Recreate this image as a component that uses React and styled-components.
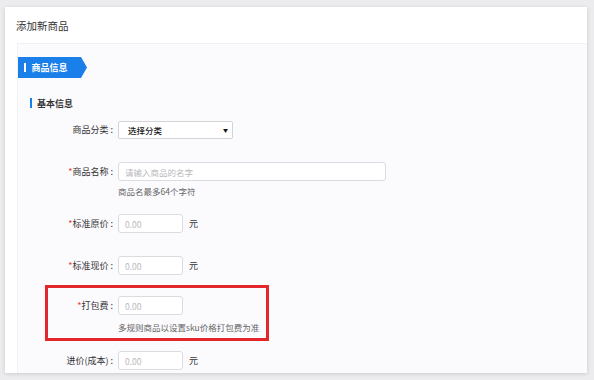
import React from "react";
import styled, { createGlobalStyle } from "styled-components";

const GlobalStyle = createGlobalStyle`
  html, body {
    margin: 0;
    padding: 0;
    background: #ececef;
  }
  body {
    font-family: "Noto Sans CJK SC", "Noto Sans", "Liberation Sans", sans-serif;
    color: #333;
  }
`;

const Page = styled.div`
  width: 594px;
  height: 380px;
  padding: 7px 0 0 5px;
  box-sizing: border-box;
  overflow: hidden;
`;

const Card = styled.div`
  width: 582px;
  height: 366px;
  background: #fff;
  box-shadow: 0 1px 4px rgba(0, 0, 0, 0.14);
  display: flex;
  flex-direction: column;
  overflow: hidden;
`;

const Header = styled.div`
  height: 36px;
  flex-shrink: 0;
  display: flex;
  align-items: center;
  padding-left: 11px;
  font-size: 10.5px;
  color: #333;
`;

const Panel = styled.div`
  flex: 1;
  margin-left: 12px;
  background: #fbfafd;
  border-top: 1px solid #f1f0f3;
  border-left: 1px solid #f1f0f3;
  display: flex;
  flex-direction: column;
  align-items: flex-start;
`;

const Tab = styled.div`
  margin-top: 13px;
  width: 69px;
  height: 21px;
  background: #1b7fe9;
  clip-path: polygon(0 0, 63px 0, 69px 50%, 63px 100%, 0 100%);
  display: flex;
  align-items: center;
  padding-left: 6px;
  box-sizing: border-box;
  color: #fff;
  font-size: 9px;
  font-weight: bold;

  &::before {
    content: "";
    width: 1.5px;
    height: 9px;
    background: #fff;
    margin-right: 6px;
  }
`;

const Section = styled.div`
  margin-top: 19px;
  margin-left: 12px;
  height: 12px;
  display: flex;
  align-items: center;
  font-size: 9px;
  font-weight: bold;
  color: #333;

  &::before {
    content: "";
    width: 2px;
    height: 10px;
    background: #1b7fe9;
    margin-right: 5px;
  }
`;

const Row = styled.div`
  margin-top: ${(p) => p.$gap}px;
  margin-left: 27px;
  width: ${(p) => (p.$highlight ? "218px" : "auto")};
  border: 3px solid ${(p) => (p.$highlight ? "#e2262b" : "transparent")};
  padding: ${(p) => (p.$highlight ? "8px 0 5px" : "0")};
  display: flex;
  flex-direction: column;
`;

const Line = styled.div`
  display: flex;
  align-items: center;
  height: 19px;
`;

const Label = styled.div`
  width: 70px;
  flex-shrink: 0;
  box-sizing: border-box;
  padding-right: 5px;
  text-align: right;
  font-size: 9px;
  color: #333;
  white-space: nowrap;

  em {
    font-style: normal;
    color: #e53935;
  }
`;

const Select = styled.div`
  width: 115px;
  height: 18px;
  box-sizing: border-box;
  border: 1px solid #d4d4d8;
  border-radius: 2px;
  background: #fff;
  display: flex;
  align-items: center;
  justify-content: space-between;
  padding: 0 4px 0 9px;
  font-size: 8.5px;
  font-weight: 500;
  color: #1a1a1a;

  &::after {
    content: "▼";
    font-size: 5px;
    color: #111;
  }
`;

const Input = styled.input`
  width: ${(p) => p.$width}px;
  height: 19px;
  box-sizing: border-box;
  border: 1px solid #dcdce0;
  border-radius: 3px;
  background: #fff;
  padding: 0 6px;
  font-family: inherit;
  font-size: 8.5px;
  color: #333;
  outline: none;

  &::placeholder {
    color: #b8b8bc;
  }
`;

const Unit = styled.span`
  margin-left: 6px;
  font-size: 9px;
  color: #333;
`;

const Help = styled.div`
  margin-top: ${(p) => p.$gap}px;
  margin-left: 70px;
  height: 12px;
  line-height: 12px;
  font-size: 8.5px;
  color: #666;
  white-space: nowrap;
`;

function Field({ label, required, children }) {
  return (
    <Line>
      <Label>
        {required && <em>*</em>}
        {label} :
      </Label>
      {children}
    </Line>
  );
}

export default function App() {
  return (
    <>
      <GlobalStyle />
      <Page>
        <Card>
          <Header>添加新商品</Header>
          <Panel>
            <Tab>商品信息</Tab>
            <Section>基本信息</Section>

            <Row $gap={8}>
              <Field label="商品分类">
                <Select>选择分类</Select>
              </Field>
            </Row>

            <Row $gap={17}>
              <Field label="商品名称" required>
                <Input $width={268} placeholder="请输入商品的名字" />
              </Field>
              <Help $gap={4}>商品名最多64个字符</Help>
            </Row>

            <Row $gap={11}>
              <Field label="标准原价" required>
                <Input $width={65} placeholder="0.00" />
                <Unit>元</Unit>
              </Field>
            </Row>

            <Row $gap={17}>
              <Field label="标准现价" required>
                <Input $width={65} placeholder="0.00" />
                <Unit>元</Unit>
              </Field>
            </Row>

            <Row $gap={7} $highlight>
              <Field label="打包费" required>
                <Input $width={65} placeholder="0.00" />
              </Field>
              <Help $gap={6}>多规则商品以设置sku价格打包费为准</Help>
            </Row>

            <Row $gap={7}>
              <Field label="进价(成本)">
                <Input $width={65} placeholder="0.00" />
                <Unit>元</Unit>
              </Field>
            </Row>
          </Panel>
        </Card>
      </Page>
    </>
  );
}
